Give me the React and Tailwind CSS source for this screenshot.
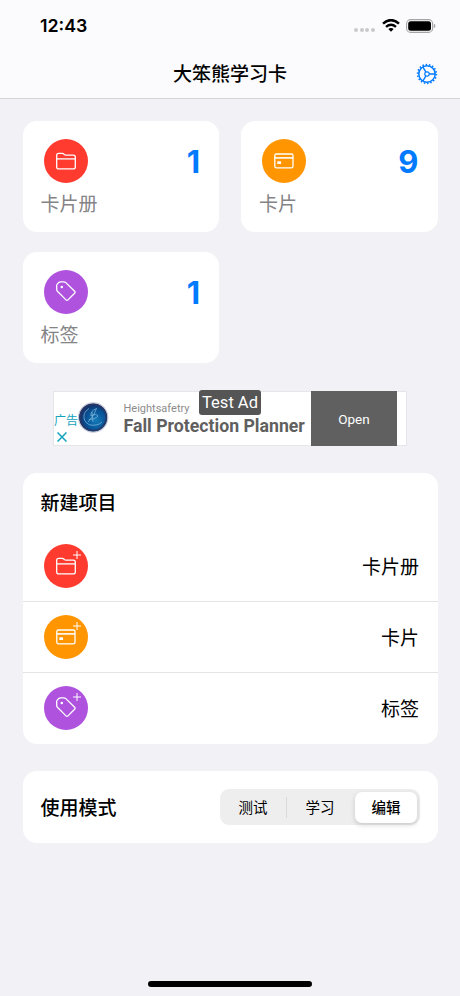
const CJK = "font-['Inter','Noto_Sans_CJK_SC',sans-serif]";

function FolderGlyph() {
  return (
    <svg className="size-[44px]" viewBox="0 0 44 44" fill="none" stroke="white" strokeWidth="1.3" strokeLinejoin="round">
      <path d="M12.7 28V16.2Q12.7 14.3 14.6 14.3H18.2Q19.1 14.3 19.8 15L20.4 15.6Q21 16.2 22 16.2H29.3Q31.3 16.2 31.3 18.2V28Q31.3 29.9 29.3 29.9H14.7Q12.7 29.9 12.7 28Z" />
      <path d="M12.7 19.9H31.3" />
    </svg>
  );
}

function CardGlyph() {
  return (
    <svg className="size-[44px]" viewBox="0 0 44 44" fill="none" stroke="white" strokeWidth="1.3">
      <rect x="12.8" y="15" width="18.2" height="13.8" rx="1.6" />
      <path d="M12.8 18.9H31" strokeWidth="1.6" />
      <rect x="15.3" y="22.2" width="3.8" height="2.9" rx="0.6" fill="white" stroke="none" />
    </svg>
  );
}

function TagGlyph() {
  return (
    <svg className="size-[44px]" viewBox="0 0 44 44" fill="none" stroke="white" strokeWidth="1.3" strokeLinejoin="round">
      <path d="M12.7 19.6V15.6Q12.7 14.6 13.4 13.9L14.8 12.5Q15.5 11.8 16.5 11.8H19.9Q21 11.8 21.8 12.6L30.6 21.3Q31.6 22.3 30.6 23.3L24 29.9Q23 30.9 22 29.9L13.4 21.3Q12.7 20.6 12.7 19.6Z" />
      <circle cx="17.8" cy="17" r="1.3" fill="white" stroke="none" />
    </svg>
  );
}

const KINDS = {
  folder: { label: "卡片册", color: "bg-[#ff3b30]", Glyph: FolderGlyph },
  card: { label: "卡片", color: "bg-[#ff9500]", Glyph: CardGlyph },
  tag: { label: "标签", color: "bg-[#af52de]", Glyph: TagGlyph },
};

function Badge({ kind, plus }) {
  const { color, Glyph } = KINDS[kind];
  return (
    <div className={`relative size-[44px] shrink-0 rounded-full ${color}`}>
      <Glyph />
      {plus && (
        <svg className="absolute top-[7px] left-[29px] size-[8px]" viewBox="0 0 8 8" stroke="white" strokeWidth="1">
          <path d="M4 0V8M0 4H8" />
        </svg>
      )}
    </div>
  );
}

function CountCard({ kind, count }) {
  return (
    <div className="h-[111px] rounded-[14px] bg-white pt-[18px] pr-[19px] pl-[18px]">
      <div className="flex h-[44px] items-center justify-between pl-[3px]">
        <Badge kind={kind} />
        <span className="pt-px text-[31px] leading-[44px] font-bold text-[#007aff]">{count}</span>
      </div>
      <div className="mt-[8px] text-[19px] leading-7 text-[#848486]">{KINDS[kind].label}</div>
    </div>
  );
}

function Gear() {
  return (
    <svg className="size-[22px]" viewBox="-11 -11 22 22" fill="none" stroke="#007aff">
      <circle r="8.2" strokeWidth="1.5" />
      <circle r="9.4" strokeWidth="1.6" strokeDasharray="1.5 1.781" />
      <circle r="2.2" strokeWidth="1.2" />
      <path d="M2.2 0H8M-1.1 1.9L-4 6.93M-1.1 -1.9L-4 -6.93" strokeWidth="1.3" />
    </svg>
  );
}

function StatusBar() {
  return (
    <div className="flex h-[51px] items-center justify-between pr-[24px] pl-[40px]">
      <span className="pt-[2px] text-[17.8px] font-semibold">12:43</span>
      <div className="flex items-center">
        <div className="mt-[9px] mr-[7px] flex gap-[1.7px]">
          {[0, 1, 2, 3].map((i) => (
            <i key={i} className="size-[4px] rounded-full bg-[#c9c9cb]" />
          ))}
        </div>
        <svg className="mr-[6px] h-[13px] w-[18px]" viewBox="0 0 18 13" fill="none" stroke="black">
          <path d="M1 4.6Q9 -2.4 17 4.6" strokeWidth="2.5" />
          <path d="M4 7.8Q9 3.6 14 7.8" strokeWidth="2.4" />
          <path d="M9 12.8L6.3 10.1Q9 8 11.7 10.1Z" fill="black" stroke="none" />
        </svg>
        <svg className="h-[14px] w-[30px]" viewBox="0 0 30 14" fill="none">
          <rect x="0.6" y="0.6" width="26" height="12.8" rx="4" stroke="#a5a5a7" strokeWidth="1.1" />
          <rect x="2.2" y="2.2" width="22.8" height="9.6" rx="2.5" fill="black" />
          <path d="M27.8 4.8Q29.5 5.4 29.5 7T27.8 9.2Z" fill="#a5a5a7" />
        </svg>
      </div>
    </div>
  );
}

function AdBanner() {
  return (
    <div className="relative mt-[28px] ml-[53px] flex h-[55px] w-[354px] border border-[#e6e6ea] bg-white font-['Roboto','Noto_Sans_CJK_SC',sans-serif]">
      <div className="w-[24px] pt-[20px] text-[#12a3bd]">
        <div className="text-[12px] leading-[19px] whitespace-nowrap">广告</div>
        <svg className="mt-px ml-[3px] size-[10px]" viewBox="0 0 10 10" stroke="#12a3bd" strokeWidth="1.5">
          <path d="M0.5 0.5L9.5 9.5M9.5 0.5L0.5 9.5" />
        </svg>
      </div>
      <svg className="mt-[10px] size-[31px]" viewBox="0 0 31 31" fill="none">
        <defs>
          <radialGradient id="orb" cx="0.6" cy="0.6" r="0.6">
            <stop offset="0" stopColor="#1479b8" />
            <stop offset="0.6" stopColor="#075094" />
            <stop offset="1" stopColor="#182b63" />
          </radialGradient>
        </defs>
        <circle cx="15.2" cy="15.5" r="14.6" fill="url(#orb)" stroke="#c5c9d6" strokeWidth="1.2" />
        <circle cx="15.2" cy="15.5" r="13" stroke="#293765" strokeWidth="1.6" />
        <path d="M11 6.5Q4 11 6.5 18Q10 25 19 22.8Q22 22 24 20M10 20Q17 13 18.5 6.5Q12 9 13 14Q18 11 20 14Q18 17 11 17.5M14 10L15 20" stroke="#83bddf" strokeWidth="0.7" />
      </svg>
      <div className="w-[202px] pt-[9px] pl-[14.5px] whitespace-nowrap">
        <div className="text-[11px] leading-[15px] text-[#8c8c8c]">Heightsafetry</div>
        <div className="text-[17.7px] leading-[20px] font-bold text-[#5f5f5f]">Fall Protection Planner</div>
      </div>
      <div className="-my-px flex h-[55px] w-[86px] items-center justify-center bg-[#606060] pt-px text-[13.5px] text-white">Open</div>
      <div className="absolute -top-[2px] left-[145px] flex h-[25px] w-[62px] items-center justify-center rounded-[3px] bg-[#555] pt-px text-[16.5px] whitespace-nowrap text-white">
        Test Ad
      </div>
    </div>
  );
}

export default function App() {
  return (
    <div className={`flex h-[996px] w-[460px] flex-col overflow-hidden bg-[#f1f1f6] text-black ${CJK}`}>
      <header className="h-[99px] shrink-0 border-b border-[#d3d3d8] bg-[#fbfbfd]">
        <StatusBar />
        <div className="grid h-[46px] grid-cols-[1fr_auto_1fr] items-center pr-[22px] pl-[22px]">
          <span />
          <h1 className="pt-[3px] text-[19px] font-medium">大笨熊学习卡</h1>
          <div className="justify-self-end">
            <Gear />
          </div>
        </div>
      </header>

      <section className="mt-[22px] grid grid-cols-2 gap-x-[22px] gap-y-[20px] px-[22.5px]">
        <CountCard kind="folder" count={1} />
        <CountCard kind="card" count={9} />
        <CountCard kind="tag" count={1} />
      </section>

      <AdBanner />

      <section className="mx-[22.5px] mt-[27px] h-[271px] rounded-[14px] bg-white">
        <h2 className="h-[58px] pt-[2px] pl-[18px] text-[19px] leading-[58px] font-medium">新建项目</h2>
        {["folder", "card", "tag"].map((kind) => (
          <div key={kind} className="flex h-[71px] items-center justify-between border-b border-[#e4e4e7] pr-[18.5px] pl-[21px] last:h-[70px] last:border-b-0">
            <Badge kind={kind} plus />
            <span className="pt-[4px] text-[19px]">{KINDS[kind].label}</span>
          </div>
        ))}
      </section>

      <section className="mx-[22.5px] mt-[27px] flex h-[72px] items-center justify-between rounded-[14px] bg-white pr-[17.5px] pl-[18px]">
        <h2 className="pt-[4px] text-[19px] font-medium">使用模式</h2>
        <div className="flex h-[36px] w-[200px] items-center rounded-[9px] bg-[#eeeeef] pr-[2px] text-[14.5px]">
          <span className="flex-1 pt-[2px] text-center">测试</span>
          <i className="h-[21px] w-px bg-[#d9d9dc]" />
          <span className="flex-1 pt-[2px] text-center">学习</span>
          <span className="mr-px ml-[2px] flex h-[31px] w-[62px] items-center justify-center rounded-[7px] bg-white pt-[2px] font-medium shadow-[0_2px_5px_rgba(0,0,0,0.16)]">
            编辑
          </span>
        </div>
      </section>

      <div className="mx-auto mt-auto mb-[9px] h-[6px] w-[164px] rounded-full bg-black" />
    </div>
  );
}
